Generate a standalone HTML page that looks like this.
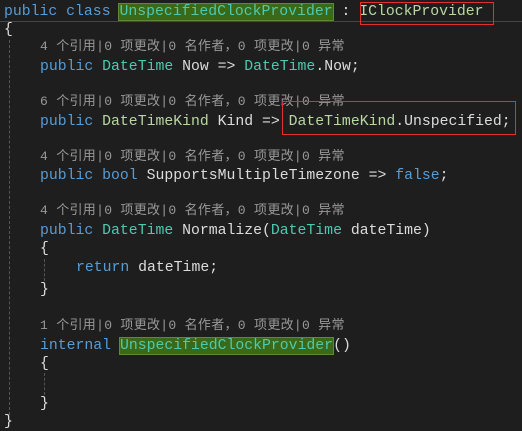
<!DOCTYPE html><html><head><style>
body{margin:0;width:522px;height:428px;background:#1e1e1e;overflow:hidden;position:relative;font-family:"Liberation Mono","Noto Sans CJK SC",monospace;}
.l{position:absolute;left:0;height:18px;line-height:18px;font-size:14.8px;color:#dcdcdc;white-space:pre;}
.c{position:absolute;left:40px;height:16px;line-height:16px;font-size:13px;letter-spacing:0.3px;color:#999;white-space:pre;font-family:"Liberation Mono","WenQuanYi Zen Hei",monospace;}
.k{color:#569cd6}.t{color:#4ec9b0}.e{color:#b8d7a3}
.hl{background:#3a6a17;outline:1px solid #5d8a3a;}
.box{position:absolute;border:1px solid #e03030;}
.g{position:absolute;width:0;border-left:1px dashed #555;}
</style></head><body>
<div style="position:absolute;left:0;top:21px;width:522px;height:1px;background:#464646"></div>
<div class="g" style="left:9px;top:40px;height:375px"></div>
<div class="g" style="left:44px;top:259px;height:22px"></div>
<div class="g" style="left:44px;top:373px;height:22px"></div>
<div class="l" style="top:3px;left:4px"><span class="k">public</span> <span class="k">class</span> <span class="t hl">UnspecifiedClockProvider</span> : <span class="e">IClockProvider</span></div>
<div class="l" style="top:21px;left:4px">{</div>
<div class="c" style="top:39px">4 个引用|0 项更改|0 名作者，0 项更改|0 异常</div>
<div class="l" style="top:58px;left:40px"><span class="k">public</span> <span class="t">DateTime</span> Now =&gt; <span class="t">DateTime</span>.Now;</div>
<div class="c" style="top:94px">6 个引用|0 项更改|0 名作者，0 项更改|0 异常</div>
<div class="l" style="top:113px;left:40px"><span class="k">public</span> <span class="e">DateTimeKind</span> Kind =&gt; <span class="e">DateTimeKind</span>.Unspecified;</div>
<div class="c" style="top:149px">4 个引用|0 项更改|0 名作者，0 项更改|0 异常</div>
<div class="l" style="top:167px;left:40px"><span class="k">public</span> <span class="k">bool</span> SupportsMultipleTimezone =&gt; <span class="k">false</span>;</div>
<div class="c" style="top:203px">4 个引用|0 项更改|0 名作者，0 项更改|0 异常</div>
<div class="l" style="top:222px;left:40px"><span class="k">public</span> <span class="t">DateTime</span> Normalize(<span class="t">DateTime</span> dateTime)</div>
<div class="l" style="top:240px;left:40px">{</div>
<div class="l" style="top:259px;left:76px"><span class="k">return</span> dateTime;</div>
<div class="l" style="top:281px;left:40px">}</div>
<div class="c" style="top:318px">1 个引用|0 项更改|0 名作者，0 项更改|0 异常</div>
<div class="l" style="top:337px;left:40px"><span class="k">internal</span> <span class="t hl">UnspecifiedClockProvider</span>()</div>
<div class="l" style="top:355px;left:40px">{</div>
<div class="l" style="top:395px;left:40px">}</div>
<div class="l" style="top:413px;left:4px">}</div>
<div class="box" style="left:360px;top:2px;width:132px;height:21px"></div>
<div class="box" style="left:282px;top:101px;width:232px;height:32px"></div>
</body></html>
